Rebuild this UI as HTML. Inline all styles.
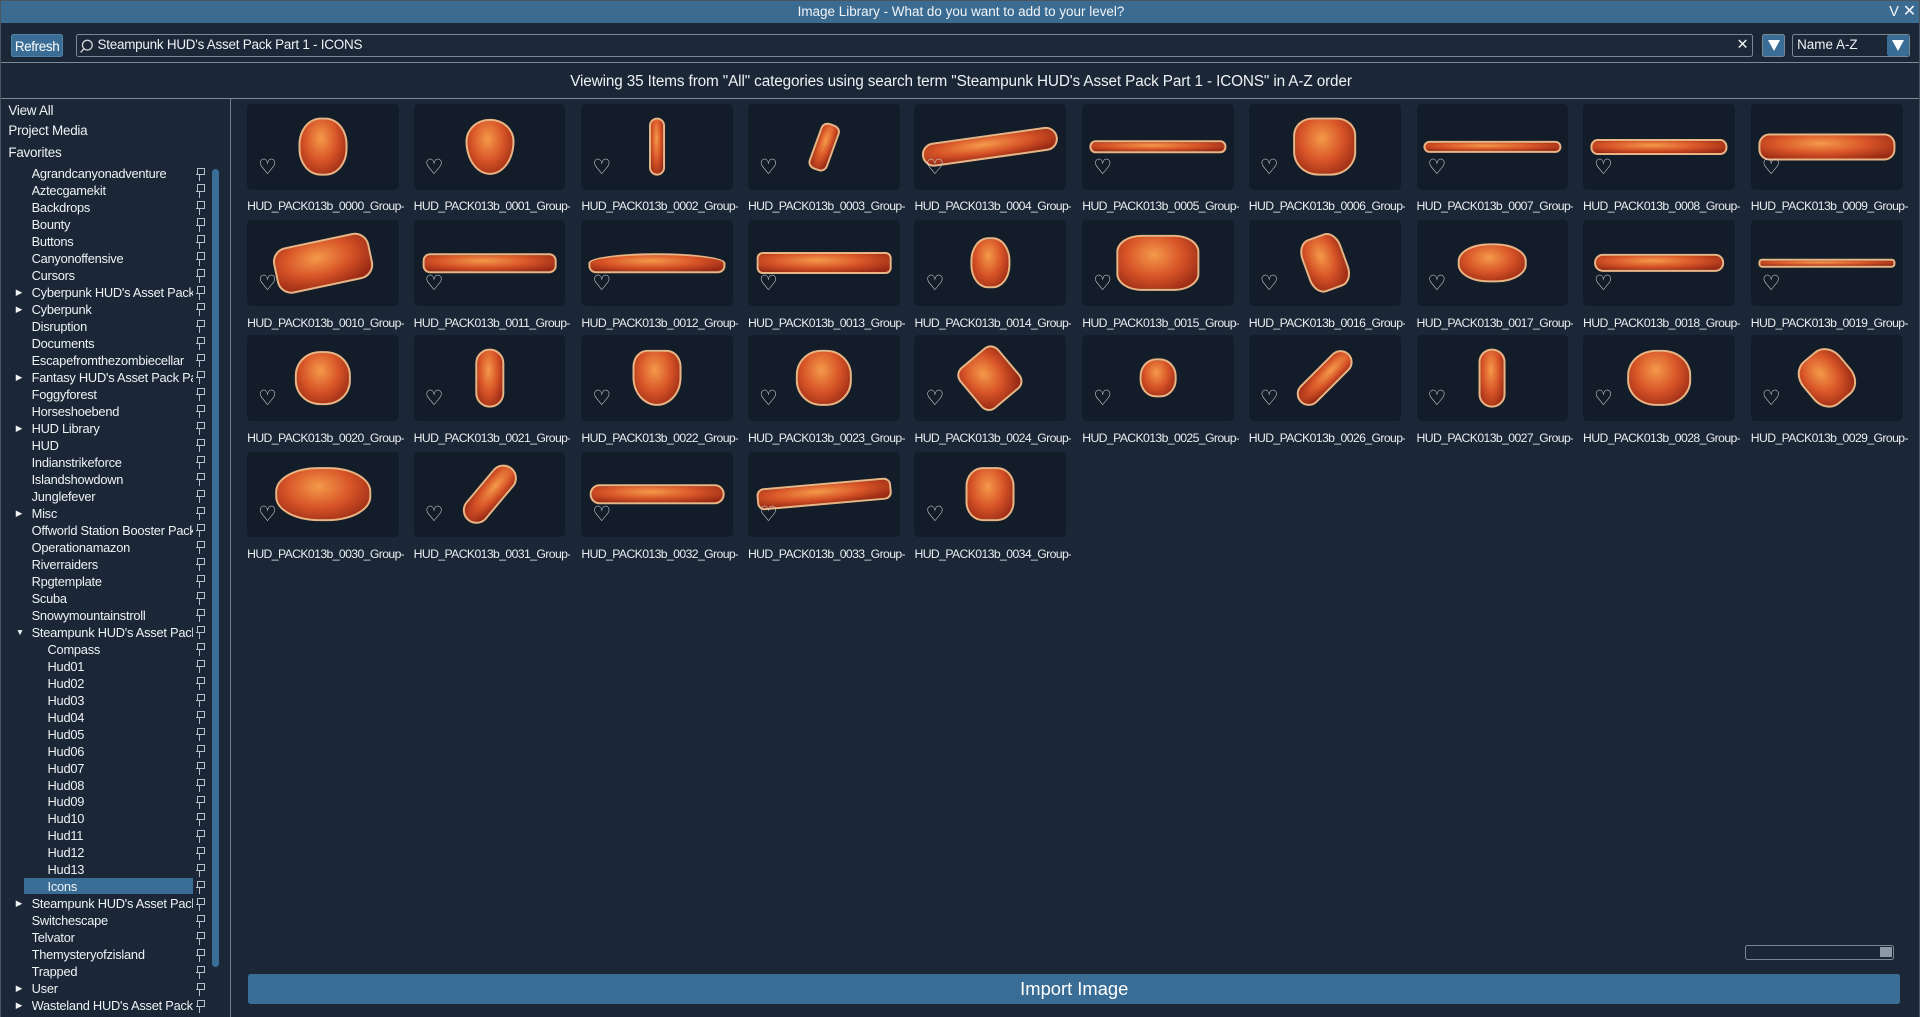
<!DOCTYPE html>
<html><head><meta charset="utf-8">
<style>
*{box-sizing:border-box;margin:0;padding:0}
html,body{width:1920px;height:1017px;overflow:hidden;background:#1b2636}
#root{zoom:1.22449;width:1568px;height:831px;position:relative;background:#1b2636;font-family:"Liberation Sans Narrow","Liberation Sans",sans-serif;color:#eef2f5;overflow:hidden;border:1px solid #4a5560}
.abs{position:absolute}
#title{left:0;top:0;width:1568px;height:18px;background:#3b6b91;text-align:center;font-size:11px;line-height:18px;color:#f2f5f8}
#tbar{left:0;top:18px;width:1568px;height:33px;border-bottom:1px solid #7d8b98}
.btn{background:#3a6d95;color:#fff;border-radius:2px}
#refresh{left:8px;top:27px;width:43px;height:19px;font-size:11px;line-height:19px;text-align:center;border:1px solid #4f80a6;letter-spacing:-0.3px}
#search{left:61px;top:27px;width:1370px;height:19px;border:1px solid #7a8896;border-radius:2px;background:#1c2838;font-size:11px;line-height:17px;padding-left:17px;letter-spacing:-0.2px}
#dd1{left:1438px;top:27px;width:19px;height:19px;border:1px solid #7a8896}
#sort{left:1463px;top:27px;width:96px;height:19px;border:1px solid #7a8896;border-radius:2px;font-size:11px;line-height:17px;padding-left:3px}
.tri{position:absolute;width:0;height:0;border-left:5px solid transparent;border-right:5px solid transparent;border-top:9px solid #fff}
#head{left:0;top:58px;width:1568px;text-align:center;font-size:12.5px;line-height:16px;letter-spacing:-0.1px}
#hline{left:0;top:79px;width:1568px;height:1px;background:#7d8b98}
#side{left:0;top:80px;width:188px;height:751px;border-right:1px solid #6f7d8a}
.top{position:absolute;left:6px;font-size:11px;letter-spacing:-0.2px}
#tree{position:absolute;left:0;top:54px;width:170px}
.r{height:13.88px;font-size:10.5px;line-height:13.88px;position:relative;white-space:nowrap;letter-spacing:-0.2px}
.r .n{position:absolute;left:25px;width:132px;overflow:hidden}
.r.c .n{left:38px}
.r .a{position:absolute;left:12px;top:0;font-size:7px}
.r.sel::before{content:"";position:absolute;left:19px;top:0;width:138px;height:13px;background:#3a6d95}
.pin{position:absolute;left:159px;top:2px;width:7px;height:10px}
.pin::before{content:"";position:absolute;left:1px;top:0;width:5px;height:5px;border:1px solid #b9c2ca;border-bottom:none}
.pin::after{content:"";position:absolute;left:0;top:5px;width:7px;height:5px;border-top:1px solid #b9c2ca;background:linear-gradient(#b9c2ca,#b9c2ca) no-repeat 3px 0/1px 5px}
#sb{left:172px;top:137px;width:6px;height:652px;background:#3a6d95;border-radius:3px}
.t{position:absolute;width:124px;height:70px;background:#131d2a;border-radius:4px}
.t b{position:absolute;left:50%;top:50%;background:radial-gradient(ellipse at 45% 35%,#f49a4a,#d85528 45%,#9a2a14 85%);border:2px solid #e9b585;border-radius:45%}
.t i{position:absolute;left:9px;top:44px;font-style:normal;font-size:17px;color:#d6dbe0;line-height:17px}
.l{position:absolute;width:128px;font-size:10px;color:#e8ecef;white-space:nowrap;overflow:hidden;letter-spacing:-0.5px}
#imp{left:202px;top:795px;width:1349px;height:24px;font-size:15px;line-height:24px;text-align:center}
#slider{left:1424px;top:771px;width:122px;height:12px;border:1px solid #7a8896;border-radius:2px}
</style></head><body><div id="root">
<div id="title" class="abs">Image Library - What do you want to add to your level?<span style="position:absolute;right:18px;top:0;font-size:12px">V</span><span style="position:absolute;right:4px;top:0;font-size:13px">✕</span></div>
<div id="tbar" class="abs"></div>
<div id="refresh" class="abs btn">Refresh</div>
<div id="search" class="abs"><svg style="position:absolute;left:3px;top:3px" width="11" height="12" viewBox="0 0 11 12"><circle cx="6" cy="5" r="4" fill="none" stroke="#ddd" stroke-width="1"/><line x1="3.2" y1="8" x2="0.5" y2="11" stroke="#ddd"/></svg>Steampunk HUD's Asset Pack Part 1 - ICONS<span style="position:absolute;right:3px;top:0;font-size:12px">✕</span></div>
<div id="dd1" class="abs btn"><div class="tri" style="left:4px;top:4px"></div></div>
<div id="sort" class="abs">Name A-Z<div class="btn" style="position:absolute;right:0;top:0;width:18px;height:17px"><div class="tri" style="left:4px;top:4px"></div></div></div>
<div id="head" class="abs">Viewing 35 Items from "All" categories using search term "Steampunk HUD's Asset Pack Part 1 - ICONS" in A-Z order</div>
<div id="hline" class="abs"></div>
<div id="side" class="abs">
<div class="top" style="top:3px">View All</div>
<div class="top" style="top:20px">Project Media</div>
<div class="top" style="top:38px">Favorites</div>
<div id="tree">
<div class="r"><span class="n">Agrandcanyonadventure</span><span class="pin"></span></div>
<div class="r"><span class="n">Aztecgamekit</span><span class="pin"></span></div>
<div class="r"><span class="n">Backdrops</span><span class="pin"></span></div>
<div class="r"><span class="n">Bounty</span><span class="pin"></span></div>
<div class="r"><span class="n">Buttons</span><span class="pin"></span></div>
<div class="r"><span class="n">Canyonoffensive</span><span class="pin"></span></div>
<div class="r"><span class="n">Cursors</span><span class="pin"></span></div>
<div class="r"><span class="a">▶</span><span class="n">Cyberpunk HUD's Asset Pack</span><span class="pin"></span></div>
<div class="r"><span class="a">▶</span><span class="n">Cyberpunk</span><span class="pin"></span></div>
<div class="r"><span class="n">Disruption</span><span class="pin"></span></div>
<div class="r"><span class="n">Documents</span><span class="pin"></span></div>
<div class="r"><span class="n">Escapefromthezombiecellar</span><span class="pin"></span></div>
<div class="r"><span class="a">▶</span><span class="n">Fantasy HUD's Asset Pack Part</span><span class="pin"></span></div>
<div class="r"><span class="n">Foggyforest</span><span class="pin"></span></div>
<div class="r"><span class="n">Horseshoebend</span><span class="pin"></span></div>
<div class="r"><span class="a">▶</span><span class="n">HUD Library</span><span class="pin"></span></div>
<div class="r"><span class="n">HUD</span><span class="pin"></span></div>
<div class="r"><span class="n">Indianstrikeforce</span><span class="pin"></span></div>
<div class="r"><span class="n">Islandshowdown</span><span class="pin"></span></div>
<div class="r"><span class="n">Junglefever</span><span class="pin"></span></div>
<div class="r"><span class="a">▶</span><span class="n">Misc</span><span class="pin"></span></div>
<div class="r"><span class="n">Offworld Station Booster Pack</span><span class="pin"></span></div>
<div class="r"><span class="n">Operationamazon</span><span class="pin"></span></div>
<div class="r"><span class="n">Riverraiders</span><span class="pin"></span></div>
<div class="r"><span class="n">Rpgtemplate</span><span class="pin"></span></div>
<div class="r"><span class="n">Scuba</span><span class="pin"></span></div>
<div class="r"><span class="n">Snowymountainstroll</span><span class="pin"></span></div>
<div class="r"><span class="a">▼</span><span class="n">Steampunk HUD's Asset Pack</span><span class="pin"></span></div>
<div class="r c"><span class="n">Compass</span><span class="pin"></span></div>
<div class="r c"><span class="n">Hud01</span><span class="pin"></span></div>
<div class="r c"><span class="n">Hud02</span><span class="pin"></span></div>
<div class="r c"><span class="n">Hud03</span><span class="pin"></span></div>
<div class="r c"><span class="n">Hud04</span><span class="pin"></span></div>
<div class="r c"><span class="n">Hud05</span><span class="pin"></span></div>
<div class="r c"><span class="n">Hud06</span><span class="pin"></span></div>
<div class="r c"><span class="n">Hud07</span><span class="pin"></span></div>
<div class="r c"><span class="n">Hud08</span><span class="pin"></span></div>
<div class="r c"><span class="n">Hud09</span><span class="pin"></span></div>
<div class="r c"><span class="n">Hud10</span><span class="pin"></span></div>
<div class="r c"><span class="n">Hud11</span><span class="pin"></span></div>
<div class="r c"><span class="n">Hud12</span><span class="pin"></span></div>
<div class="r c"><span class="n">Hud13</span><span class="pin"></span></div>
<div class="r c sel"><span class="n">Icons</span><span class="pin"></span></div>
<div class="r"><span class="a">▶</span><span class="n">Steampunk HUD's Asset Pack</span><span class="pin"></span></div>
<div class="r"><span class="n">Switchescape</span><span class="pin"></span></div>
<div class="r"><span class="n">Telvator</span><span class="pin"></span></div>
<div class="r"><span class="n">Themysteryofzisland</span><span class="pin"></span></div>
<div class="r"><span class="n">Trapped</span><span class="pin"></span></div>
<div class="r"><span class="a">▶</span><span class="n">User</span><span class="pin"></span></div>
<div class="r"><span class="a">▶</span><span class="n">Wasteland HUD's Asset Pack</span><span class="pin"></span></div>
</div>
</div>
<div id="sb" class="abs"></div>

<div class="t" style="left:201px;top:84px"><b style="width:40px;height:48px;transform:translate(-50%,-50%)"></b><i>♡</i></div><div class="l" style="left:201px;top:162px">HUD_PACK013b_0000_Group-1</div>
<div class="t" style="left:337px;top:84px"><b style="width:40px;height:46px;transform:translate(-50%,-50%);border-radius:50% 50% 50% 50%/40% 40% 60% 60%"></b><i>♡</i></div><div class="l" style="left:337px;top:162px">HUD_PACK013b_0001_Group-1</div>
<div class="t" style="left:474px;top:84px"><b style="width:13px;height:48px;transform:translate(-50%,-50%);border-radius:7px"></b><i>♡</i></div><div class="l" style="left:474px;top:162px">HUD_PACK013b_0002_Group-1</div>
<div class="t" style="left:610px;top:84px"><b style="width:16px;height:40px;transform:translate(-50%,-50%) rotate(20deg);border-radius:6px"></b><i>♡</i></div><div class="l" style="left:610px;top:162px">HUD_PACK013b_0003_Group-1</div>
<div class="t" style="left:746px;top:84px"><b style="width:112px;height:20px;transform:translate(-50%,-50%) rotate(-8deg);border-radius:10px"></b><i>♡</i></div><div class="l" style="left:746px;top:162px">HUD_PACK013b_0004_Group-1</div>
<div class="t" style="left:883px;top:84px"><b style="width:112px;height:11px;transform:translate(-50%,-50%);border-radius:5px"></b><i>♡</i></div><div class="l" style="left:883px;top:162px">HUD_PACK013b_0005_Group-1</div>
<div class="t" style="left:1019px;top:84px"><b style="width:52px;height:48px;transform:translate(-50%,-50%);border-radius:30% 30% 40% 40%"></b><i>♡</i></div><div class="l" style="left:1019px;top:162px">HUD_PACK013b_0006_Group-1</div>
<div class="t" style="left:1156px;top:84px"><b style="width:112px;height:10px;transform:translate(-50%,-50%);border-radius:5px"></b><i>♡</i></div><div class="l" style="left:1156px;top:162px">HUD_PACK013b_0007_Group-1</div>
<div class="t" style="left:1292px;top:84px"><b style="width:112px;height:13px;transform:translate(-50%,-50%);border-radius:6px"></b><i>♡</i></div><div class="l" style="left:1292px;top:162px">HUD_PACK013b_0008_Group-1</div>
<div class="t" style="left:1429px;top:84px"><b style="width:112px;height:22px;transform:translate(-50%,-50%);border-radius:9px"></b><i>♡</i></div><div class="l" style="left:1429px;top:162px">HUD_PACK013b_0009_Group-1</div>
<div class="t" style="left:201px;top:179px"><b style="width:80px;height:38px;transform:translate(-50%,-50%) rotate(-12deg);border-radius:12px"></b><i>♡</i></div><div class="l" style="left:201px;top:257px">HUD_PACK013b_0010_Group-1</div>
<div class="t" style="left:337px;top:179px"><b style="width:110px;height:16px;transform:translate(-50%,-50%);border-radius:6px"></b><i>♡</i></div><div class="l" style="left:337px;top:257px">HUD_PACK013b_0011_Group-1</div>
<div class="t" style="left:474px;top:179px"><b style="width:112px;height:16px;transform:translate(-50%,-50%);border-radius:50% 50% 6px 6px"></b><i>♡</i></div><div class="l" style="left:474px;top:257px">HUD_PACK013b_0012_Group-1</div>
<div class="t" style="left:610px;top:179px"><b style="width:110px;height:18px;transform:translate(-50%,-50%);border-radius:5px"></b><i>♡</i></div><div class="l" style="left:610px;top:257px">HUD_PACK013b_0013_Group-1</div>
<div class="t" style="left:746px;top:179px"><b style="width:32px;height:42px;transform:translate(-50%,-50%)"></b><i>♡</i></div><div class="l" style="left:746px;top:257px">HUD_PACK013b_0014_Group-1</div>
<div class="t" style="left:883px;top:179px"><b style="width:68px;height:46px;transform:translate(-50%,-50%);border-radius:30%"></b><i>♡</i></div><div class="l" style="left:883px;top:257px">HUD_PACK013b_0015_Group-1</div>
<div class="t" style="left:1019px;top:179px"><b style="width:34px;height:46px;transform:translate(-50%,-50%) rotate(-20deg);border-radius:30%"></b><i>♡</i></div><div class="l" style="left:1019px;top:257px">HUD_PACK013b_0016_Group-1</div>
<div class="t" style="left:1156px;top:179px"><b style="width:56px;height:32px;transform:translate(-50%,-50%)"></b><i>♡</i></div><div class="l" style="left:1156px;top:257px">HUD_PACK013b_0017_Group-1</div>
<div class="t" style="left:1292px;top:179px"><b style="width:106px;height:15px;transform:translate(-50%,-50%);border-radius:7px"></b><i>♡</i></div><div class="l" style="left:1292px;top:257px">HUD_PACK013b_0018_Group-1</div>
<div class="t" style="left:1429px;top:179px"><b style="width:112px;height:7px;transform:translate(-50%,-50%);border-radius:3px"></b><i>♡</i></div><div class="l" style="left:1429px;top:257px">HUD_PACK013b_0019_Group-1</div>
<div class="t" style="left:201px;top:273px"><b style="width:46px;height:44px;transform:translate(-50%,-50%)"></b><i>♡</i></div><div class="l" style="left:201px;top:351px">HUD_PACK013b_0020_Group-1</div>
<div class="t" style="left:337px;top:273px"><b style="width:24px;height:48px;transform:translate(-50%,-50%);border-radius:12px"></b><i>♡</i></div><div class="l" style="left:337px;top:351px">HUD_PACK013b_0021_Group-1</div>
<div class="t" style="left:474px;top:273px"><b style="width:40px;height:46px;transform:translate(-50%,-50%);border-radius:30% 30% 50% 50%"></b><i>♡</i></div><div class="l" style="left:474px;top:351px">HUD_PACK013b_0022_Group-1</div>
<div class="t" style="left:610px;top:273px"><b style="width:46px;height:46px;transform:translate(-50%,-50%)"></b><i>♡</i></div><div class="l" style="left:610px;top:351px">HUD_PACK013b_0023_Group-1</div>
<div class="t" style="left:746px;top:273px"><b style="width:42px;height:44px;transform:translate(-50%,-50%) rotate(-40deg);border-radius:20%"></b><i>♡</i></div><div class="l" style="left:746px;top:351px">HUD_PACK013b_0024_Group-1</div>
<div class="t" style="left:883px;top:273px"><b style="width:30px;height:32px;transform:translate(-50%,-50%)"></b><i>♡</i></div><div class="l" style="left:883px;top:351px">HUD_PACK013b_0025_Group-1</div>
<div class="t" style="left:1019px;top:273px"><b style="width:20px;height:56px;transform:translate(-50%,-50%) rotate(45deg);border-radius:10px"></b><i>♡</i></div><div class="l" style="left:1019px;top:351px">HUD_PACK013b_0026_Group-1</div>
<div class="t" style="left:1156px;top:273px"><b style="width:22px;height:48px;transform:translate(-50%,-50%);border-radius:11px"></b><i>♡</i></div><div class="l" style="left:1156px;top:351px">HUD_PACK013b_0027_Group-1</div>
<div class="t" style="left:1292px;top:273px"><b style="width:52px;height:46px;transform:translate(-50%,-50%)"></b><i>♡</i></div><div class="l" style="left:1292px;top:351px">HUD_PACK013b_0028_Group-1</div>
<div class="t" style="left:1429px;top:273px"><b style="width:40px;height:46px;transform:translate(-50%,-50%) rotate(-40deg);border-radius:35%"></b><i>♡</i></div><div class="l" style="left:1429px;top:351px">HUD_PACK013b_0029_Group-1</div>
<div class="t" style="left:201px;top:368px"><b style="width:78px;height:44px;transform:translate(-50%,-50%)"></b><i>♡</i></div><div class="l" style="left:201px;top:446px">HUD_PACK013b_0030_Group-1</div>
<div class="t" style="left:337px;top:368px"><b style="width:22px;height:56px;transform:translate(-50%,-50%) rotate(40deg);border-radius:11px"></b><i>♡</i></div><div class="l" style="left:337px;top:446px">HUD_PACK013b_0031_Group-1</div>
<div class="t" style="left:474px;top:368px"><b style="width:110px;height:16px;transform:translate(-50%,-50%);border-radius:8px"></b><i>♡</i></div><div class="l" style="left:474px;top:446px">HUD_PACK013b_0032_Group-1</div>
<div class="t" style="left:610px;top:368px"><b style="width:110px;height:18px;transform:translate(-50%,-50%) rotate(-5deg);border-radius:6px"></b><i>♡</i></div><div class="l" style="left:610px;top:446px">HUD_PACK013b_0033_Group-1</div>
<div class="t" style="left:746px;top:368px"><b style="width:40px;height:44px;transform:translate(-50%,-50%);border-radius:35%"></b><i>♡</i></div><div class="l" style="left:746px;top:446px">HUD_PACK013b_0034_Group-1</div>

<div id="slider" class="abs"><div style="position:absolute;right:1px;top:1px;width:10px;height:8px;background:#8c98a4"></div></div>
<div id="imp" class="abs btn">Import Image</div>
</div></body></html>
